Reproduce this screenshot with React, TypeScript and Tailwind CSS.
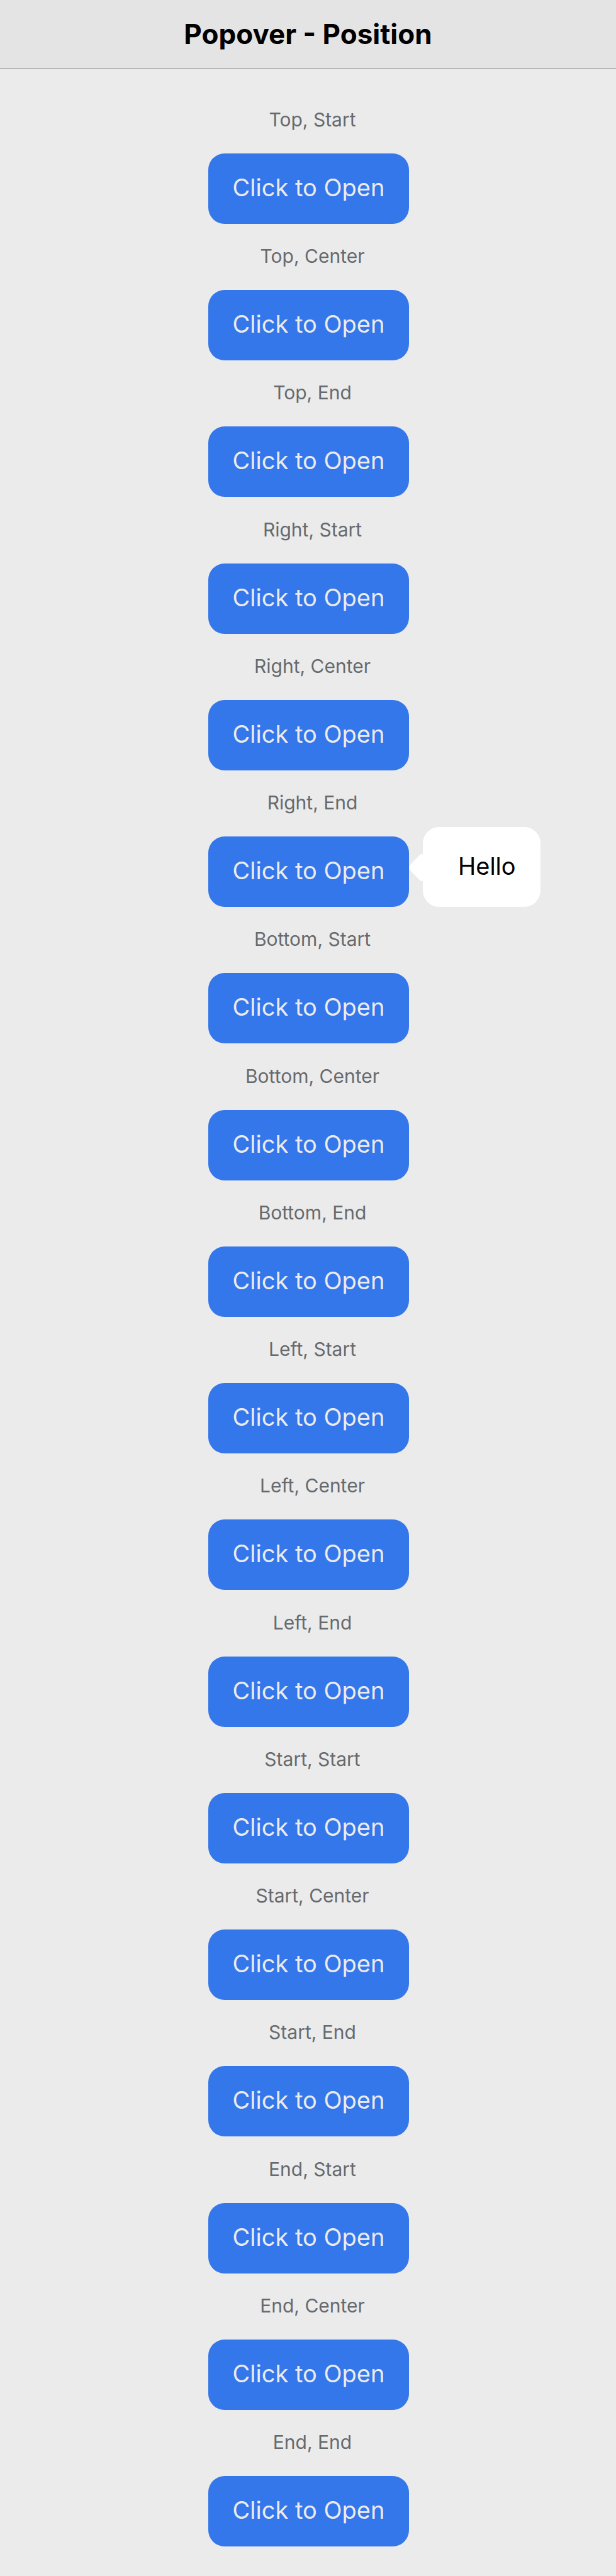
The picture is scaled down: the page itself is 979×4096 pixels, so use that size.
import { useState } from "react";

const positions = [
  "Top, Start",
  "Top, Center",
  "Top, End",
  "Right, Start",
  "Right, Center",
  "Right, End",
  "Bottom, Start",
  "Bottom, Center",
  "Bottom, End",
  "Left, Start",
  "Left, Center",
  "Left, End",
  "Start, Start",
  "Start, Center",
  "Start, End",
  "End, Start",
  "End, Center",
  "End, End",
];

function Popover() {
  return (
    <div
      role="dialog"
      aria-label="Hello"
      className="absolute bottom-0 left-full ml-[22px] flex h-[127px] w-[187px] items-center rounded-[26px] bg-white pb-1 pl-[56px] text-[38px] leading-[48px] text-black"
    >
      <svg
        className="absolute right-full top-1/2 h-[44px] w-[22px] -translate-y-1/2"
        viewBox="0 0 22 44"
        fill="#fff"
        aria-hidden="true"
      >
        <path d="M22 1 H20.5 Q18.5 1 17 2.5 L2.5 17.5 Q-1.5 22.5 2.5 27.5 L17 42.5 Q18.5 44 20.5 44 H22 Z" />
      </svg>
      Hello
    </div>
  );
}

export default function App() {
  const [open, setOpen] = useState<string | null>("Right, End");

  return (
    <div className="flex min-h-screen flex-col bg-[#ebebeb] font-[Inter,sans-serif]">
      <header className="flex h-[110px] items-center justify-center border-b-2 border-[#b7b7b7] bg-[#e4e4e4]">
        <h1 className="text-[44px] leading-[52px] font-bold text-black">Popover - Position</h1>
      </header>
      <main className="flex flex-1 flex-col items-center justify-between gap-4 pt-[60px] pb-[47px] pl-0.5">
        {positions.map((position, index) => (
          <section key={position} className="flex flex-col items-center gap-[34px]">
            <h2 id={`position-${index}`} className="pl-3 text-[30px] leading-[40px] text-[#666a6e]">
              {position}
            </h2>
            <div className="relative">
              <button
                type="button"
                aria-describedby={`position-${index}`}
                aria-expanded={open === position}
                onClick={() => setOpen(open === position ? null : position)}
                className="block h-[112px] w-[319px] rounded-[26px] bg-[#3477eb] pb-1 text-[38px] leading-[48px] text-[#ebebeb]"
              >
                Click to Open
              </button>
              {open === position && <Popover />}
            </div>
          </section>
        ))}
      </main>
    </div>
  );
}
